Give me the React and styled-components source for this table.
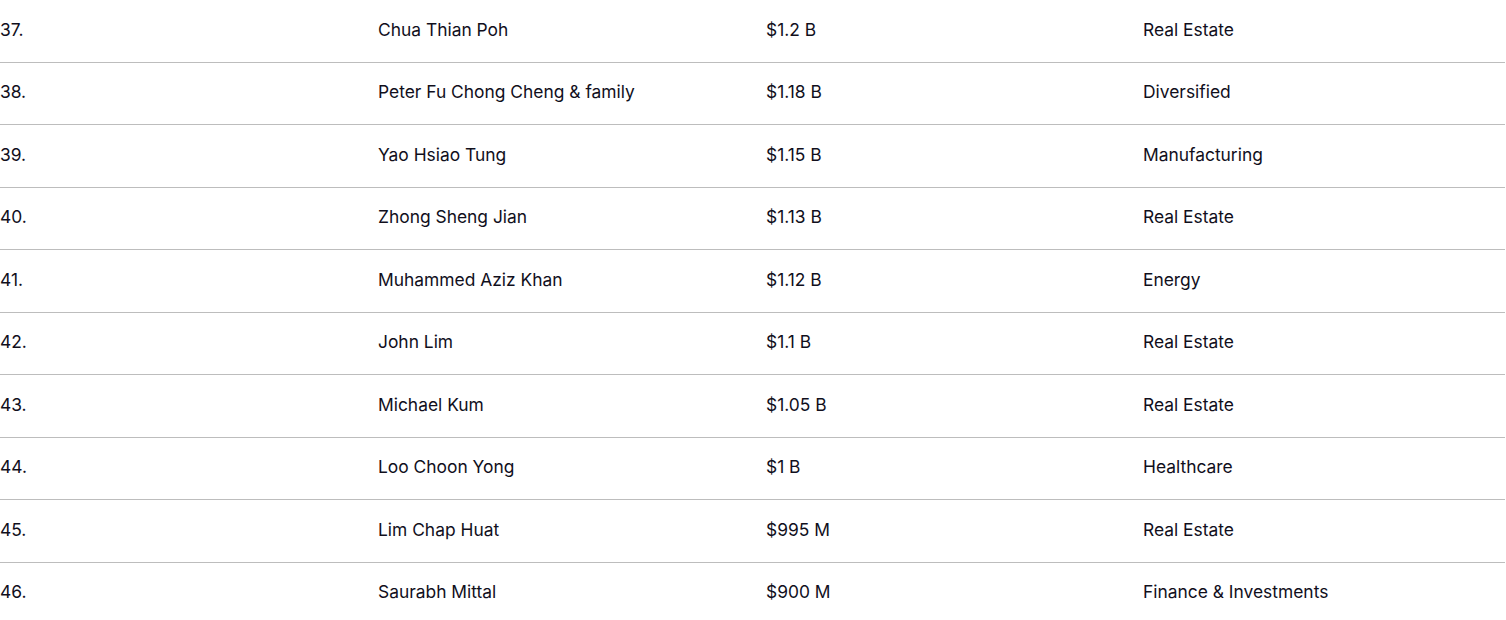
import React from 'react';
import styled, { createGlobalStyle } from 'styled-components';

const rows = [
  ['37.', 'Chua Thian Poh', '$1.2 B', 'Real Estate'],
  ['38.', 'Peter Fu Chong Cheng & family', '$1.18 B', 'Diversified'],
  ['39.', 'Yao Hsiao Tung', '$1.15 B', 'Manufacturing'],
  ['40.', 'Zhong Sheng Jian', '$1.13 B', 'Real Estate'],
  ['41.', 'Muhammed Aziz Khan', '$1.12 B', 'Energy'],
  ['42.', 'John Lim', '$1.1 B', 'Real Estate'],
  ['43.', 'Michael Kum', '$1.05 B', 'Real Estate'],
  ['44.', 'Loo Choon Yong', '$1 B', 'Healthcare'],
  ['45.', 'Lim Chap Huat', '$995 M', 'Real Estate'],
  ['46.', 'Saurabh Mittal', '$900 M', 'Finance & Investments'],
];

const GlobalStyle = createGlobalStyle`
  body {
    margin: 0;
    background: #fff;
    font-family: Inter, "Noto Sans", sans-serif;
    color: #110f1c;
  }
`;

const Table = styled.div`
  width: 1506px;
`;

const Row = styled.div`
  display: grid;
  grid-template-columns: 378px 388px 377px 1fr;
  align-items: center;
  height: 62.5px;
  box-sizing: border-box;
  border-bottom: 1px solid ${p => (p.last ? 'transparent' : '#bdbdbd')};
  margin-right: 1px;
  padding-bottom: 2px;
`;

const Cell = styled.div`
  font-size: 17.4px;
  line-height: 24px;
  white-space: nowrap;
`;

export default function App() {
  return (
    <>
      <GlobalStyle />
      <Table>
        {rows.map((r, i) => (
          <Row key={r[0]} last={i === rows.length - 1}>
            {r.map((c, j) => (
              <Cell key={j}>{c}</Cell>
            ))}
          </Row>
        ))}
      </Table>
    </>
  );
}
